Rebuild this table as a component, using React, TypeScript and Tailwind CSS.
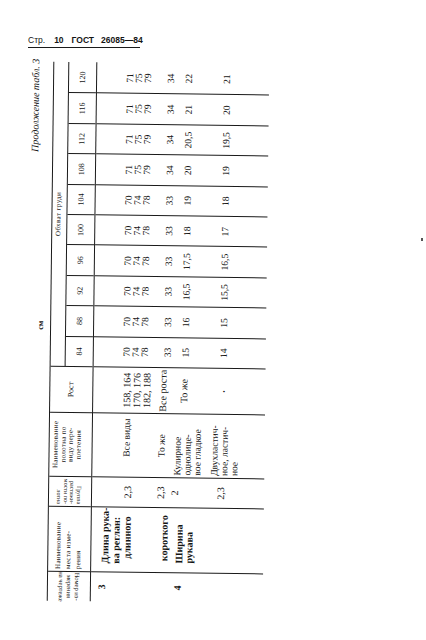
// Scanned GOST page: table 3 continuation, printed sideways.
// The table is laid out upright (548 x 240) and turned a quarter turn,
// with a slight extra tilt to match the scan.

const chest = [
  { h: "84", a: ["70", "74", "78"], b: "33", c: "15", d: "14" },
  { h: "88", a: ["70", "74", "78"], b: "33", c: "16", d: "15" },
  { h: "92", a: ["70", "74", "78"], b: "33", c: "16,5", d: "15,5" },
  { h: "96", a: ["70", "74", "78"], b: "33", c: "17,5", d: "16,5" },
  { h: "100", a: ["70", "74", "78"], b: "33", c: "18", d: "17" },
  { h: "104", a: ["70", "74", "78"], b: "33", c: "19", d: "18" },
  { h: "108", a: ["71", "75", "79"], b: "34", c: "20", d: "19" },
  { h: "112", a: ["71", "75", "79"], b: "34", c: "20,5", d: "19,5" },
  { h: "116", a: ["71", "75", "79"], b: "34", c: "21", d: "20" },
  { h: "120", a: ["71", "75", "79"], b: "34", c: "22", d: "21" },
];

type Col = (typeof chest)[number];

function ChestHead({ col, last }: { col: Col; last: boolean }) {
  return (
    <div
      className={
        last
          ? "w-[30.4px] shrink-0 flex items-center justify-center text-[8px]"
          : "w-[30.4px] shrink-0 flex items-center justify-center text-[8px] border-r border-[#1a1a1a]"
      }
    >
      {col.h}
    </div>
  );
}

function ChestCol({ col, last }: { col: Col; last: boolean }) {
  return (
    <div
      className={
        last
          ? "w-[30.4px] shrink-0 flex flex-col items-center text-[9.5px] leading-[9px]"
          : "w-[30.4px] shrink-0 flex flex-col items-center text-[9.5px] leading-[9px] border-r border-[#1a1a1a]"
      }
    >
      <div className="mt-[29px] flex flex-col items-center">
        {col.a.map((v) => (
          <span key={v}>{v}</span>
        ))}
      </div>
      <span className="mt-[13.5px]">{col.b}</span>
      <span className="mt-[9px]">{col.c}</span>
      <span className="mt-[29px]">{col.d}</span>
    </div>
  );
}

export default function App() {
  return (
    <div className="relative w-[426px] h-[640px] overflow-hidden bg-white text-[#141414] font-['Liberation_Serif','Times_New_Roman',serif]">
      {/* running head */}
      <div className="pt-[35px] pl-[28px]">
        <div className="flex w-[112px] whitespace-nowrap border-b border-[#1a1a1a] pb-[2px] font-['Liberation_Sans',Arial,sans-serif] text-[8.5px] leading-[10px]">
          <span>Стр.</span>
          <span className="ml-[9px] font-bold">10</span>
          <span className="ml-[8px] font-bold">ГОСТ</span>
          <span className="ml-[7px] font-bold">26085—84</span>
        </div>
      </div>

      {/* sideways table */}
      <div className="relative ml-[28px] mt-[12px] h-[548px] w-[240px] rotate-[0.7deg]">
        <div className="absolute left-0 top-0 h-[240px] w-[548px] origin-top-left -rotate-90 translate-y-[548px]">
          <div className="h-[22px]">
            <div className="flex h-[8px] justify-end whitespace-nowrap text-[10px] italic leading-[10px]">
              Продолжение табл. 3
            </div>
            <div className="pl-[277px] text-[8px] font-bold leading-[9px]">см</div>
          </div>

          <div className="ml-[6px] w-[539px]">
            {/* header */}
            <div className="flex h-[44px] border-y border-[#1a1a1a] text-[7px] leading-[7.5px]">
              <div className="w-[30px] shrink-0 border-r border-[#1a1a1a]">
                <div className="flex h-full rotate-180 flex-col items-center justify-center whitespace-nowrap text-[6.5px] leading-[8px]">
                  <span>Номер из-</span>
                  <span>мерения</span>
                  <span>на чертеже</span>
                </div>
              </div>
              <div className="flex w-[65px] shrink-0 flex-col whitespace-nowrap border-r border-[#1a1a1a] pl-[2px] pt-[5px] text-[7px] leading-[10px] tracking-[0.3px]">
                <span>Наименование</span>
                <span>места изме-</span>
                <span>рения</span>
              </div>
              <div className="w-[30px] shrink-0 border-r border-[#1a1a1a]">
                <div className="flex h-full rotate-180 flex-col items-end whitespace-nowrap pr-[2px] pt-[9px] text-[6px] leading-[6.5px]">
                  <span>Группа</span>
                  <span>растяжи-</span>
                  <span>мости по-</span>
                  <span>лотна</span>
                </div>
              </div>
              <div className="flex w-[64px] shrink-0 flex-col items-center whitespace-nowrap border-r border-[#1a1a1a] pt-[3px] tracking-[0.3px]">
                <span>Наименование</span>
                <span>полотна по</span>
                <span>виду пере-</span>
                <span>плетения</span>
              </div>
              <div className="flex w-[46px] shrink-0 items-center justify-center border-r border-[#1a1a1a] text-[8px]">
                Рост
              </div>
              <div className="flex w-[304px] shrink-0 flex-col">
                <div className="flex h-[15px] items-center justify-center border-b border-[#1a1a1a] tracking-[0.4px]">
                  Обхват груди
                </div>
                <div className="flex flex-1">
                  {chest.map((c, i) => (
                    <ChestHead key={c.h} col={c} last={i === chest.length - 1} />
                  ))}
                </div>
              </div>
            </div>

            {/* body */}
            <div className="flex h-[172px] text-[10px] leading-[10px]">
              <div className="flex w-[30px] shrink-0 flex-col items-center border-r border-[#1a1a1a] font-bold">
                <span className="mt-[6px]">3</span>
                <span className="mt-[66px]">4</span>
              </div>
              <div className="flex w-[65px] shrink-0 flex-col whitespace-nowrap border-r border-[#1a1a1a] font-bold">
                <div className="mt-[8px] pl-[8px] leading-[11px]">
                  <div>Длина рука-</div>
                  <div>ва реглан:</div>
                  <div className="pl-[5px]">длинного</div>
                </div>
                <div className="mt-[26px] pl-[11px] leading-[11px]">короткого</div>
                <div className="mt-[5px] pl-[9px]">
                  <div>Ширина</div>
                  <div>рукава</div>
                </div>
              </div>
              <div className="flex w-[30px] shrink-0 flex-col items-center border-r border-[#1a1a1a]">
                <span className="mt-[31px]">2,3</span>
                <span className="mt-[23px]">2,3</span>
                <span className="mt-[4px]">2</span>
                <span className="mt-[36px]">2,3</span>
              </div>
              <div className="flex w-[64px] shrink-0 flex-col whitespace-nowrap border-r border-[#1a1a1a] text-[9.5px]">
                <div className="mt-[29px] pl-[20px]">Все виды</div>
                <div className="mt-[25px] pl-[20px]">То же</div>
                <div className="mt-[6px] pl-[2px]">
                  <div>Кулирное</div>
                  <div>однолице-</div>
                  <div>вое гладкое</div>
                </div>
                <div className="mt-[7px] pl-[2px]">
                  <div>Двухластич-</div>
                  <div>ное, ластич-</div>
                  <div>ное</div>
                </div>
              </div>
              <div className="flex w-[46px] shrink-0 flex-col items-center whitespace-nowrap border-r border-[#1a1a1a]">
                <div className="mt-[29px]">
                  <div>158, 164</div>
                  <div>170, 176</div>
                  <div>182, 188</div>
                </div>
                <div className="mt-[6px]">Все роста</div>
                <div className="mt-[11px]">То же</div>
                <div className="mt-[30px] text-[7px]">•</div>
              </div>
              {chest.map((c, i) => (
                <ChestCol key={c.h} col={c} last={i === chest.length - 1} />
              ))}
            </div>
          </div>
        </div>
      </div>

      {/* scan speck */}
      <span className="absolute left-[421px] top-[238px] h-[3px] w-[2px] bg-[#555]" />
    </div>
  );
}
